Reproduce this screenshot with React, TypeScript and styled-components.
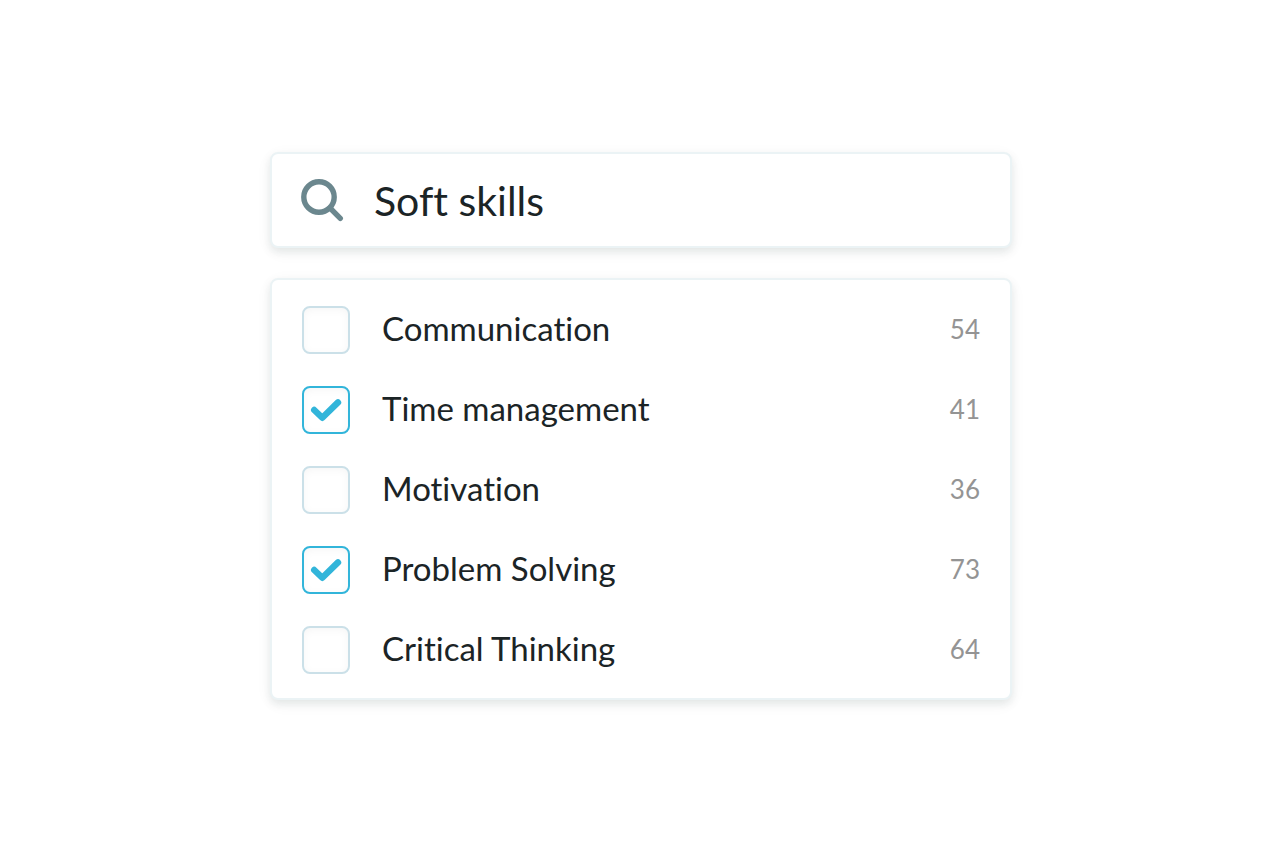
import React, { useState } from "react";
import styled, { createGlobalStyle } from "styled-components";

const GlobalStyle = createGlobalStyle`
  *, *::before, *::after { box-sizing: border-box; }
  body {
    margin: 0;
    background: #ffffff;
    color: #1b2426;
    font-family: Lato, "Open Sans", sans-serif;
    font-variant-ligatures: none;
  }
`;

const Page = styled.main`
  display: flex;
  justify-content: center;
  min-height: 100vh;
  padding: 152px 22px 24px 24px;
`;

const Filter = styled.form`
  display: flex;
  flex-direction: column;
  gap: 30px;
  width: 100%;
  max-width: 742px;
`;

const Card = styled.div`
  border: 2px solid #ebf3f5;
  border-radius: 8px;
  background: #ffffff;
  box-shadow: 0 4px 8px rgba(20, 50, 45, 0.1), 0 4px 20px rgba(20, 50, 45, 0.03);
`;

const SearchBar = styled(Card)`
  display: flex;
  align-items: center;
  gap: 30px;
  padding: 22px 28px;
`;

const SearchIcon = styled.svg`
  flex: none;
  width: 44px;
  height: 44px;
`;

const SearchInput = styled.input`
  flex: 1;
  min-width: 0;
  height: 48px;
  padding: 0;
  border: 0;
  outline: 0;
  background: transparent;
  color: inherit;
  font-family: inherit;
  font-size: 41px;
  font-variant-ligatures: none;
`;

const Options = styled(Card)`
  display: flex;
  flex-direction: column;
  gap: 32px;
  padding: 26px 30px 24px;
`;

const Option = styled.label`
  display: flex;
  align-items: flex-start;
  gap: 32px;
  cursor: pointer;
`;

const CheckWrap = styled.span`
  display: grid;
  flex: none;
  width: 48px;
  height: 48px;

  > * { grid-area: 1 / 1; }
`;

const Checkbox = styled.input`
  appearance: none;
  width: 48px;
  height: 48px;
  margin: 0;
  border: 2px solid #cbe0e8;
  border-radius: 8px;
  background: #ffffff;
  box-shadow: inset 0 2px 8px rgba(0, 0, 0, 0.04);
  cursor: pointer;

  &:checked {
    border-color: #32b5da;
  }
`;

const CheckMark = styled.svg`
  width: 48px;
  height: 48px;
  pointer-events: none;
`;

const OptionName = styled.span`
  flex: 1;
  font-size: 33px;
  line-height: 44px;
`;

const Count = styled.span`
  color: #949494;
  font-size: 26px;
  line-height: 46px;
`;

const skills = [
  { name: "Communication", count: 54 },
  { name: "Time management", count: 41 },
  { name: "Motivation", count: 36 },
  { name: "Problem Solving", count: 73 },
  { name: "Critical Thinking", count: 64 },
];

export default function App() {
  const [query, setQuery] = useState("Soft skills");
  const [selected, setSelected] = useState(["Time management", "Problem Solving"]);

  const toggle = (name: string) =>
    setSelected((current) =>
      current.includes(name) ? current.filter((item) => item !== name) : [...current, name]
    );

  return (
    <>
      <GlobalStyle />
      <Page>
        <Filter onSubmit={(event) => event.preventDefault()}>
          <SearchBar>
            <SearchIcon viewBox="0 0 44 44" fill="none" stroke="#6b878e" aria-hidden="true">
              <circle cx="19" cy="19" r="15.2" strokeWidth="5.4" />
              <path d="M30 30L40.3 40.3" strokeWidth="5.4" strokeLinecap="round" />
            </SearchIcon>
            <SearchInput
              type="text"
              aria-label="Search skills"
              value={query}
              onChange={(event) => setQuery(event.target.value)}
            />
          </SearchBar>
          <Options>
            {skills.map(({ name, count }) => (
              <Option key={name}>
                <CheckWrap>
                  <Checkbox
                    type="checkbox"
                    checked={selected.includes(name)}
                    onChange={() => toggle(name)}
                  />
                  {selected.includes(name) && (
                    <CheckMark viewBox="0 0 48 48" fill="none" aria-hidden="true">
                      <path
                        d="M12.2 24L20.3 31.8L36 16.4"
                        stroke="#32b5da"
                        strokeWidth="6.4"
                        strokeLinecap="round"
                        strokeLinejoin="round"
                      />
                    </CheckMark>
                  )}
                </CheckWrap>
                <OptionName>{name}</OptionName>
                <Count>{count}</Count>
              </Option>
            ))}
          </Options>
        </Filter>
      </Page>
    </>
  );
}
